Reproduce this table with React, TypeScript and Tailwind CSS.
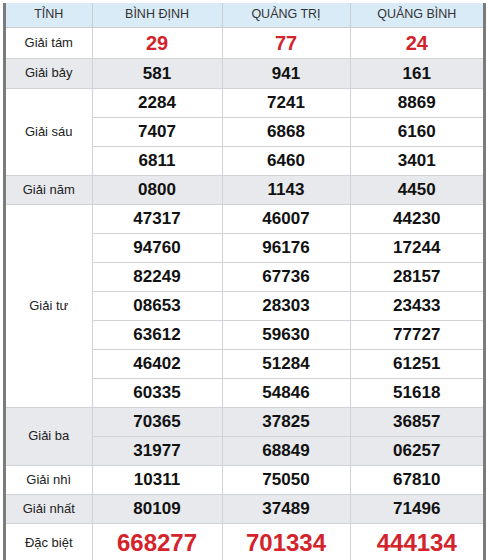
const provinces = ["BÌNH ĐỊNH", "QUẢNG TRỊ", "QUẢNG BÌNH"];

type Prize = {
  label: string;
  rows: string[][];
  kind?: "small" | "special";
  shaded?: boolean;
  h: string;
};

const prizes: Prize[] = [
  { label: "Giải tám", rows: [["29", "77", "24"]], kind: "small", h: "h-[31px]" },
  { label: "Giải bảy", rows: [["581", "941", "161"]], shaded: true, h: "h-[30px]" },
  {
    label: "Giải sáu",
    rows: [
      ["2284", "7241", "8869"],
      ["7407", "6868", "6160"],
      ["6811", "6460", "3401"],
    ],
    h: "h-[29px]",
  },
  { label: "Giải năm", rows: [["0800", "1143", "4450"]], shaded: true, h: "h-[29px]" },
  {
    label: "Giải tư",
    rows: [
      ["47317", "46007", "44230"],
      ["94760", "96176", "17244"],
      ["82249", "67736", "28157"],
      ["08653", "28303", "23433"],
      ["63612", "59630", "77727"],
      ["46402", "51284", "61251"],
      ["60335", "54846", "51618"],
    ],
    h: "h-[29px]",
  },
  {
    label: "Giải ba",
    rows: [
      ["70365", "37825", "36857"],
      ["31977", "68849", "06257"],
    ],
    shaded: true,
    h: "h-[29px]",
  },
  { label: "Giải nhì", rows: [["10311", "75050", "67810"]], h: "h-[29px]" },
  { label: "Giải nhất", rows: [["80109", "37489", "71496"]], shaded: true, h: "h-[29px]" },
  { label: "Đặc biệt", rows: [["668277", "701334", "444134"]], kind: "special", h: "h-[40px]" },
];

function numberClass(kind?: Prize["kind"]) {
  if (kind === "small") return "text-[20px] text-[#d3232b]";
  if (kind === "special") return "text-[24px] text-[#d3232b]";
  return "text-[17px] text-[#111]";
}

export default function App() {
  return (
    <div className="w-[489px] bg-white pt-[3px] font-['Liberation_Sans',Arial,sans-serif]">
      <div className="mx-[3px] border-x-[3px] border-[#7b7b7b]">
        <table className="w-full table-fixed border-collapse">
          <colgroup>
            <col className="w-[86px]" />
            <col className="w-[130px]" />
            <col className="w-[128px]" />
            <col />
          </colgroup>
          <thead>
            <tr className="h-[24px] bg-[#d9ebf7] text-[12.5px] text-[#333]">
              <th className="border-b border-[#c9cdd2] font-normal">TỈNH</th>
              {provinces.map((p) => (
                <th key={p} className="border-b border-l border-[#c9cdd2] font-normal">
                  {p}
                </th>
              ))}
            </tr>
          </thead>
          <tbody>
            {prizes.map((prize) =>
              prize.rows.map((row, i) => (
                <tr
                  key={prize.label + i}
                  className={`${prize.h} ${prize.shaded ? "bg-[#e8e9ed]" : "bg-white"}`}
                >
                  {i === 0 && (
                    <td
                      rowSpan={prize.rows.length}
                      className="border-b border-[#cfd2d6] text-center text-[13px] text-[#222]"
                    >
                      {prize.label}
                    </td>
                  )}
                  {row.map((n, j) => (
                    <td
                      key={j}
                      className={`border-b border-l border-[#cfd2d6] text-center font-bold leading-none ${numberClass(prize.kind)}`}
                    >
                      {n}
                    </td>
                  ))}
                </tr>
              ))
            )}
          </tbody>
        </table>
      </div>
    </div>
  );
}
